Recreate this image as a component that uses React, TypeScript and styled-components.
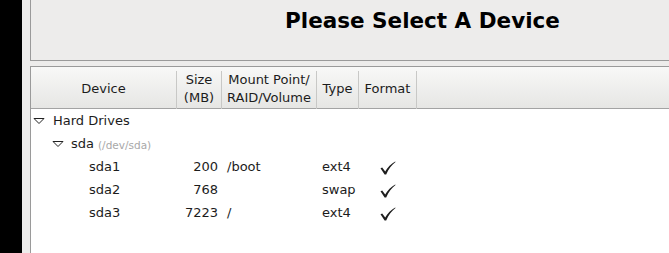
import React from 'react';
import styled, { createGlobalStyle } from 'styled-components';

type Part = {
  name: string;
  size: string;
  mount: string;
  type: string;
  format: boolean;
};

const parts: Part[] = [
  { name: 'sda1', size: '200', mount: '/boot', type: 'ext4', format: true },
  { name: 'sda2', size: '768', mount: '', type: 'swap', format: true },
  { name: 'sda3', size: '7223', mount: '/', type: 'ext4', format: true },
];

const COLS = '146px 45px 95px 42px 58px 1fr';

const GlobalStyle = createGlobalStyle`
  html, body {
    margin: 0;
    padding: 0;
    width: 669px;
    height: 253px;
    overflow: hidden;
    background: #000;
    font-family: 'DejaVu Sans', 'Liberation Sans', sans-serif;
  }
`;

const Expander = ({ depth }: { depth: number }) => (
  <Arrow width="12" height="8" viewBox="0 0 12 8" $depth={depth}>
    <polygon points="1,1.5 11,1.5 6,6.5" fill="none" stroke="#222" strokeWidth="1" />
  </Arrow>
);

const Check = () => (
  <svg width="16" height="14" viewBox="0 0 16 14">
    <path
      d="M0.5 7.2 L2.2 6.4 L5.2 10.6 C7.6 6.6 11 2.8 15.2 0.6 L15.5 1.1 C11.6 4 8.6 8.2 6.2 13.4 L4.6 13.4 Z"
      fill="#1e1e1e"
    />
  </svg>
);

const App: React.FC = () => (
  <>
    <GlobalStyle />
    <Screen>
      <Strip />
      <Main>
        <TitlePanel>
          <Title>Please Select A Device</Title>
        </TitlePanel>
        <TablePanel>
          <Header>
            <HeadCell>Device</HeadCell>
            <HeadCell>
              Size
              <br />
              (MB)
            </HeadCell>
            <HeadCell>
              Mount Point/
              <br />
              RAID/Volume
            </HeadCell>
            <HeadCell>Type</HeadCell>
            <HeadCell>Format</HeadCell>
            <HeadFill />
          </Header>
          <Row>
            <NameCell $indent={2}>
              <Expander depth={0} />
              Hard Drives
            </NameCell>
          </Row>
          <Row>
            <NameCell $indent={21}>
              <Expander depth={1} />
              sda <DevPath>(/dev/sda)</DevPath>
            </NameCell>
          </Row>
          {parts.map((p) => (
            <Row key={p.name}>
              <NameCell $indent={58}>{p.name}</NameCell>
              <SizeCell>{p.size}</SizeCell>
              <Cell>{p.mount}</Cell>
              <Cell>{p.type}</Cell>
              <CheckCell>{p.format ? <Check /> : null}</CheckCell>
            </Row>
          ))}
        </TablePanel>
      </Main>
    </Screen>
  </>
);

export default App;

const Screen = styled.div`
  display: flex;
  width: 669px;
  height: 253px;
  overflow: hidden;
`;

const Strip = styled.div`
  width: 22px;
  flex-shrink: 0;
  background: #000;
`;

const Main = styled.div`
  flex: 1;
  background: #edeceb;
  padding-left: 8px;
  display: flex;
  flex-direction: column;
  gap: 5px;
  min-width: 0;
`;

const TitlePanel = styled.div`
  width: 800px;
  height: 61px;
  box-sizing: border-box;
  border-left: 1px solid #9a9a9a;
  border-bottom: 1px solid #9a9a9a;
  padding-left: 254px;
`;

const Title = styled.h1`
  margin: 0;
  padding-top: 8px;
  font-size: 21.5px;
  line-height: 26px;
  font-weight: bold;
  color: #000;
`;

const TablePanel = styled.div`
  flex: 1;
  width: 800px;
  background: #fff;
  border-left: 1px solid #9a9a9a;
  border-top: 1px solid #9a9a9a;
  color: #1c1c1c;
  font-size: 13px;
`;

const Header = styled.div`
  display: grid;
  grid-template-columns: ${COLS};
  height: 41px;
  background: linear-gradient(#f8f8f7, #e6e6e4);
  border-bottom: 1px solid #a3a3a3;
`;

const HeadCell = styled.div`
  display: flex;
  align-items: center;
  justify-content: center;
  text-align: center;
  line-height: 18px;
  margin: 4px 0;
  padding-bottom: 2px;
  border-right: 1px solid #c8c8c6;
  color: #1c1c1c;
`;

const HeadFill = styled.div``;

const Row = styled.div`
  display: grid;
  grid-template-columns: ${COLS};
  height: 23px;
  align-items: center;
`;

const Cell = styled.div`
  padding-left: 5px;
  white-space: nowrap;
`;

const NameCell = styled(Cell)<{ $indent: number }>`
  display: flex;
  align-items: center;
  padding-left: ${(p) => p.$indent}px;
`;

const SizeCell = styled(Cell)`
  text-align: right;
  padding-right: 4px;
  padding-left: 0;
`;

const CheckCell = styled(Cell)`
  display: flex;
  align-items: center;
  padding-left: 21px;
  padding-top: 2px;
`;

const Arrow = styled.svg<{ $depth: number }>`
  margin-right: ${(p) => (p.$depth === 0 ? 8 : 7)}px;
  flex-shrink: 0;
`;

const DevPath = styled.span`
  font-size: 10.5px;
  color: #a8a8a8;
  margin-left: 4px;
  margin-top: 2px;
`;
